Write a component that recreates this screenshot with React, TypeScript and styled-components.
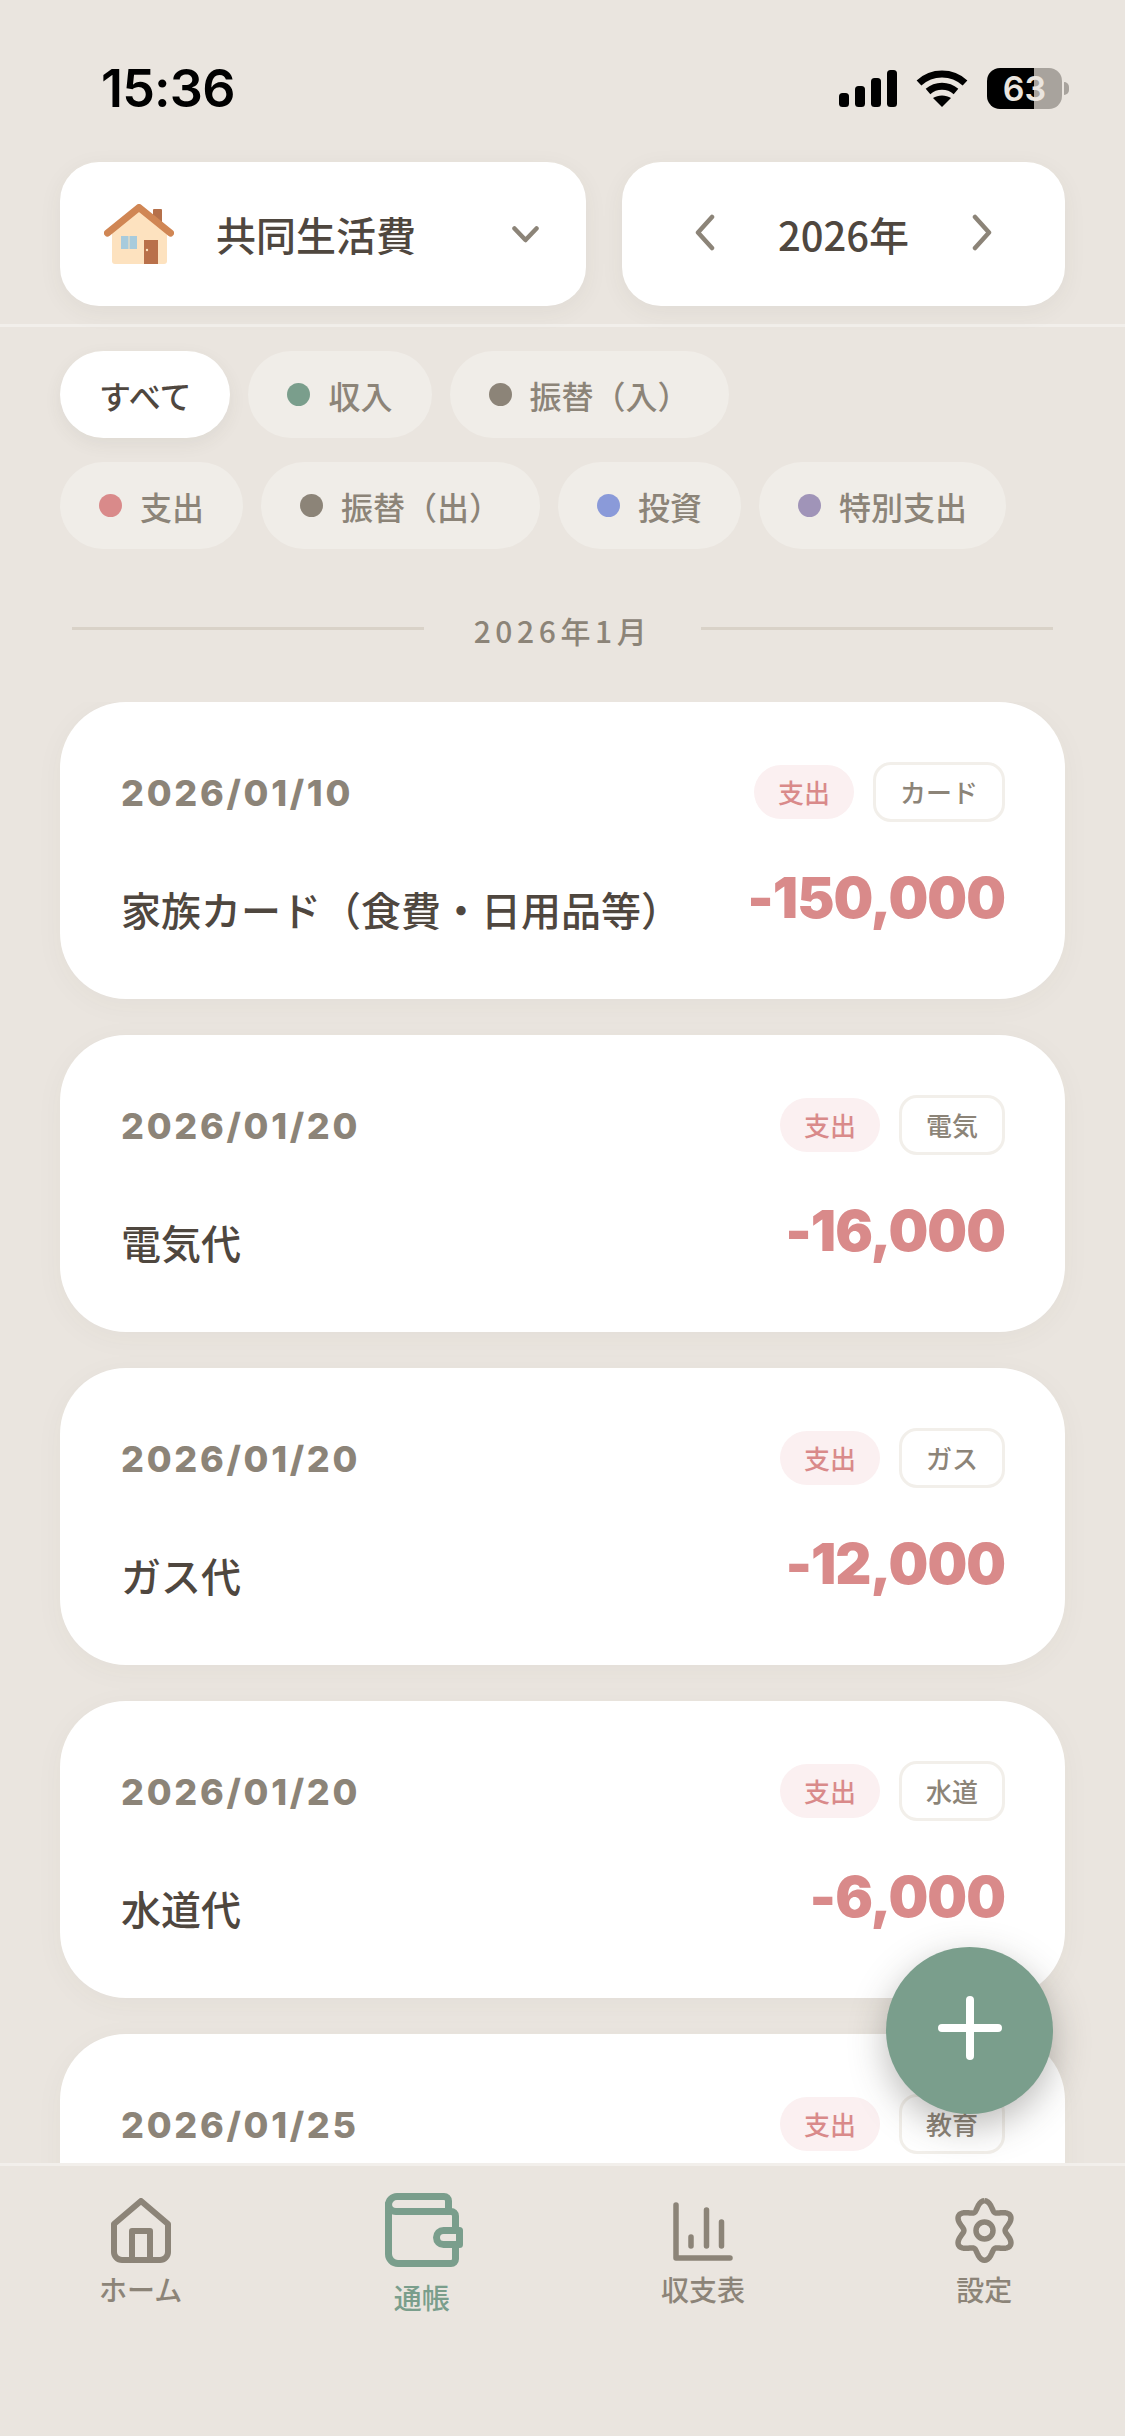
import React from 'react';
import styled, { createGlobalStyle } from 'styled-components';

const GlobalStyle = createGlobalStyle`
  html, body {
    margin: 0;
    padding: 0;
    background: #eae5df;
  }
  * {
    box-sizing: border-box;
  }
`;

const FONT = `Inter, "Noto Sans CJK JP", sans-serif`;
const CJK_FONT = `"Noto Sans CJK JP", sans-serif`;

const Phone = styled.div`
  position: relative;
  width: 1125px;
  height: 2436px;
  overflow: hidden;
  background: #eae5df;
  display: flex;
  flex-direction: column;
  font-family: ${FONT};
  color: #4f473f;
`;
const StatusBar = styled.div`
  height: 162px;
  flex: 0 0 162px;
  padding: 64px 55px 0 101px;
  display: flex;
  justify-content: space-between;
  align-items: flex-start;
`;
const Time = styled.div`
  font-size: 52px;
  line-height: 50px;
  font-weight: 600;
  color: #000;
  letter-spacing: -0.8px;
`;
const StatusIcons = styled.div`
  display: flex;
  align-items: center;
  gap: 19px;
  padding-top: 4px;
`;
const Battery = styled.div`
  position: relative;
  width: 75px;
  height: 41px;
  border-radius: 13px;
  background: linear-gradient(to right, #000 0 47px, #a8a39d 47px);
  color: #eae5df;
  font-size: 34px;
  line-height: 41px;
  font-weight: 600;
  text-align: center;
  margin-right: 8px;
  &::after {
    content: '';
    position: absolute;
    right: -7px;
    top: 14px;
    width: 5px;
    height: 13px;
    border-radius: 0 6px 6px 0;
    background: #a8a39d;
  }
`;
const Header = styled.div`
  display: flex;
  gap: 36px;
  padding: 0 60px 18px;
  border-bottom: 3px solid #f2efeb;
`;
const Panel = styled.div<{ $width: number }>`
  width: ${(p) => p.$width}px;
  height: 144px;
  border-radius: 39px;
  background: #fff;
  box-shadow: 0 6px 24px rgba(74, 66, 56, 0.06);
  display: flex;
  align-items: center;
`;
const GroupPanel = styled(Panel)`
  padding: 0 47px 0 44px;
`;
const GroupName = styled.div`
  flex: 1;
  margin-left: 42px;
  font-size: 40px;
  font-weight: 500;
`;
const YearPanel = styled(Panel)`
  justify-content: space-between;
  padding: 0 72px;
`;
const YearText = styled.div`
  font-family: ${CJK_FONT};
  font-size: 40px;
  font-weight: 500;
`;
const Filters = styled.div`
  display: flex;
  flex-direction: column;
  gap: 24px;
  padding: 24px 60px 0;
`;
const FilterRow = styled.div`
  display: flex;
  gap: 18px;
`;
const Chip = styled.div<{ $active?: boolean }>`
  height: 87px;
  padding: 0 39px;
  border-radius: 44px;
  display: flex;
  align-items: center;
  gap: 18px;
  font-size: 32px;
  font-weight: 500;
  white-space: nowrap;
  color: ${(p) => (p.$active ? '#4f473f' : '#8c8478')};
  background: ${(p) => (p.$active ? '#fff' : '#f0ede8')};
  box-shadow: ${(p) => (p.$active ? '0 6px 18px rgba(74, 66, 56, 0.07)' : 'none')};
`;
const Dot = styled.span<{ $color: string }>`
  width: 23px;
  height: 23px;
  border-radius: 50%;
  background: ${(p) => p.$color};
`;
const MonthDivider = styled.div`
  display: flex;
  align-items: center;
  gap: 50px;
  margin: 62px 72px 0;
  height: 40px;
`;
const MonthLine = styled.div`
  flex: 1;
  height: 3px;
  background: #d9d2c8;
  margin-top: -5px;
`;
const MonthText = styled.div`
  font-family: ${CJK_FONT};
  font-size: 30px;
  letter-spacing: 4.6px;
  font-weight: 500;
  color: #8c8478;
  margin-bottom: 3px;
`;
const List = styled.div`
  flex: 1;
  min-height: 0;
  overflow: hidden;
  display: flex;
  flex-direction: column;
  gap: 36px;
  margin-top: 51px;
  padding: 0 60px;
`;
const Scroll = styled.div`
  flex: 1;
  min-height: 0;
  overflow: hidden;
  display: flex;
  flex-direction: column;
`;
const Card = styled.div`
  flex: 0 0 297px;
  border-radius: 66px;
  background: #fff;
  box-shadow: 0 6px 30px rgba(74, 66, 56, 0.04);
  padding: 60px 60px 0 61px;
`;
const CardTop = styled.div`
  display: flex;
  justify-content: space-between;
  align-items: center;
  height: 60px;
`;
const DateText = styled.div`
  font-size: 36px;
  font-weight: 800;
  letter-spacing: 2.7px;
  color: #8c8478;
  padding-top: 2px;
`;
const Tags = styled.div`
  display: flex;
  align-items: center;
  gap: 19px;
`;
const TypeTag = styled.div`
  height: 54px;
  padding: 0 24px;
  border-radius: 27px;
  background: #fbf0f1;
  color: #d98a8a;
  font-size: 26px;
  font-weight: 500;
  line-height: 58px;
`;
const CategoryTag = styled.div`
  height: 60px;
  padding: 0 24px;
  border-radius: 18px;
  border: 3px solid #f2efea;
  background: #fff;
  color: #8c8478;
  font-size: 26px;
  font-weight: 500;
  line-height: 58px;
`;
const CardBottom = styled.div`
  display: flex;
  justify-content: space-between;
  align-items: flex-start;
  margin-top: 46px;
`;
const Title = styled.div`
  font-size: 40px;
  font-weight: 500;
  line-height: 56px;
  margin-top: 16px;
  white-space: nowrap;
`;
const Amount = styled.div`
  font-size: 56px;
  font-weight: 900;
  line-height: 60px;
  letter-spacing: -1px;
  color: #d98a8a;
`;
const Nav = styled.div`
  flex: 0 0 273px;
  border-top: 3px solid #f2efeb;
  background: #eae5df;
  display: grid;
  grid-template-columns: repeat(4, 1fr);
`;
const Tab = styled.div<{ $active?: boolean }>`
  display: flex;
  flex-direction: column;
  align-items: center;
  padding-top: ${(p) => (p.$active ? 27 : 32)}px;
  gap: ${(p) => (p.$active ? 14 : 10)}px;
  font-size: 28px;
  font-weight: 500;
  line-height: 36px;
  color: ${(p) => (p.$active ? '#7a9e8c' : '#8c8478')};
`;
const Fab = styled.div`
  position: absolute;
  left: 886px;
  top: 1947px;
  width: 167px;
  height: 167px;
  border-radius: 50%;
  background: #7a9e8c;
  box-shadow: 0 12px 36px rgba(60, 55, 50, 0.34);
  display: flex;
  align-items: center;
  justify-content: center;
`;

const SignalIcon = () => (
  <svg width="58" height="37" viewBox="0 0 58 37" fill="#000">
    <rect x="0" y="23" width="10" height="14" rx="3.5" />
    <rect x="16" y="16" width="10" height="21" rx="3.5" />
    <rect x="32" y="8" width="10" height="29" rx="3.5" />
    <rect x="48" y="0" width="10" height="37" rx="3.5" />
  </svg>
);

const WifiIcon = () => (
  <svg width="52" height="38" viewBox="0 0 52 38" fill="none" stroke="#000" strokeWidth="7">
    <path d="M3 13 C16 1 36 1 49 13" />
    <path d="M12 21.5 C20 14.5 32 14.5 40 21.5" />
    <path d="M26 37 L17 28 C22 24.5 30 24.5 35 28 Z" fill="#000" stroke="none" />
  </svg>
);

const HouseLogo = () => (
  <svg width="70" height="60" viewBox="0 0 70 60">
    <rect x="49" y="5" width="9" height="18" rx="1" fill="#b5704a" />
    <path d="M8 28 L35 4 L63 28 V57 a3 3 0 0 1 -3 3 H11 a3 3 0 0 1 -3 -3 Z" fill="#fde2bf" />
    <path d="M3.5 29 L35 3.5 L66.5 29" fill="none" stroke="#d08654" strokeWidth="7" strokeLinecap="round" strokeLinejoin="round" />
    <rect x="17" y="32" width="7.5" height="13" fill="#a8cbdc" />
    <rect x="25.5" y="32" width="7.5" height="13" fill="#a8cbdc" />
    <rect x="40" y="36" width="14" height="24" fill="#b9704a" />
    <circle cx="43" cy="46" r="1.2" fill="#fde2bf" />
  </svg>
);

const Chevron = ({ d, width, height }: { d: string; width: number; height: number }) => (
  <svg width={width} height={height} viewBox={`0 0 ${width} ${height}`} fill="none" stroke="#8c8478" strokeWidth="4.5" strokeLinecap="round" strokeLinejoin="round">
    <path d={d} />
  </svg>
);

const HomeIcon = () => (
  <svg width="62" height="65" viewBox="0 0 62 65" fill="none" stroke="#8c8478" strokeWidth="6" strokeLinejoin="round" strokeLinecap="round">
    <path d="M4 26 L31 3 L58 26 V54 a8 8 0 0 1 -8 8 H12 a8 8 0 0 1 -8 -8 Z" />
    <path d="M22 62 V33 H40 V62" />
  </svg>
);

const WalletIcon = () => (
  <svg width="82" height="74" viewBox="-4 0 82 74" fill="none" stroke="#7a9e8c" strokeWidth="7" strokeLinejoin="round" strokeLinecap="round">
    <path d="M63.5 18.5 V8 a4.5 4.5 0 0 0 -4.5 -4.5 H12 a8.5 8.5 0 0 0 -8.5 8.5 V61 a9.5 9.5 0 0 0 9.5 9.5 H66 a4.5 4.5 0 0 0 4.5 -4.5 V52" />
    <path d="M3.5 11 a7.5 7.5 0 0 0 7.5 7.5 H66 a4.5 4.5 0 0 1 4.5 4.5 V37" />
    <path d="M74.5 37.5 H58.5 a7 7 0 0 0 0 14 H74.5 Z" />
  </svg>
);

const ChartIcon = () => (
  <svg width="62" height="65" viewBox="0 0 62 65" fill="none" stroke="#8c8478" strokeWidth="5.5" strokeLinecap="round" strokeLinejoin="round">
    <path d="M4 7 V60 H58" />
    <path d="M19 39 V48 M34.5 12 V48 M49.5 24 V48" />
  </svg>
);

// six soft lobes, traced around the centre
const gearPath = Array.from({ length: 145 }, (_, i) => {
  const angle = (i / 144) * Math.PI * 2;
  const radius = 25.2 + 4.6 * Math.cos(6 * angle);
  const x = 32.5 + radius * Math.sin(angle);
  const y = 32.5 - radius * Math.cos(angle);
  return `${i === 0 ? 'M' : 'L'}${x.toFixed(2)} ${y.toFixed(2)}`;
}).join(' ');

const GearIcon = () => (
  <svg width="65" height="65" viewBox="0 0 65 65" fill="none" stroke="#8c8478" strokeWidth="5.5" strokeLinejoin="round">
    <path d={gearPath} />
    <circle cx="32.5" cy="32.5" r="8.5" />
  </svg>
);

const PlusIcon = () => (
  <svg width="64" height="70" viewBox="0 0 64 70" stroke="#fff" strokeWidth="8" strokeLinecap="round">
    <path d="M32 4 V60 M4 32 H60" />
  </svg>
);

const firstRow = [
  { label: '収入', color: '#7a9e8c' },
  { label: '振替（入）', color: '#8c8478' },
];
const secondRow = [
  { label: '支出', color: '#d98a8a' },
  { label: '振替（出）', color: '#8c8478' },
  { label: '投資', color: '#8a9ad9' },
  { label: '特別支出', color: '#a094b8' },
];
const entries = [
  { date: '2026/01/10', tag: 'カード', title: '家族カード（食費・日用品等）', amount: '-150,000' },
  { date: '2026/01/20', tag: '電気', title: '電気代', amount: '-16,000' },
  { date: '2026/01/20', tag: 'ガス', title: 'ガス代', amount: '-12,000' },
  { date: '2026/01/20', tag: '水道', title: '水道代', amount: '-6,000' },
  { date: '2026/01/25', tag: '教育' },
];

const App = () => {
  return (
    <Phone>
      <GlobalStyle />
      <StatusBar>
        <Time>15:36</Time>
        <StatusIcons>
          <SignalIcon />
          <WifiIcon />
          <Battery>63</Battery>
        </StatusIcons>
      </StatusBar>
      <Header>
        <GroupPanel $width={526}>
          <HouseLogo />
          <GroupName>共同生活費</GroupName>
          <Chevron d="M2.5 2.5 L13.5 14 L24.5 2.5" width={27} height={17} />
        </GroupPanel>
        <YearPanel $width={443}>
          <Chevron d="M18 3 L4 18.5 L18 34" width={22} height={40} />
          <YearText>2026年</YearText>
          <Chevron d="M4 3 L18 18.5 L4 34" width={22} height={40} />
        </YearPanel>
      </Header>
      <Scroll>
        <Filters>
          <FilterRow>
            <Chip $active>すべて</Chip>
            {firstRow.map((chip) => (
              <Chip key={chip.label}>
                <Dot $color={chip.color} />
                {chip.label}
              </Chip>
            ))}
          </FilterRow>
          <FilterRow>
            {secondRow.map((chip) => (
              <Chip key={chip.label}>
                <Dot $color={chip.color} />
                {chip.label}
              </Chip>
            ))}
          </FilterRow>
        </Filters>
        <MonthDivider>
          <MonthLine />
          <MonthText>2026年1月</MonthText>
          <MonthLine />
        </MonthDivider>
        <List>
          {entries.map((entry, index) => (
            <Card key={index}>
              <CardTop>
                <DateText>{entry.date}</DateText>
                <Tags>
                  <TypeTag>支出</TypeTag>
                  <CategoryTag>{entry.tag}</CategoryTag>
                </Tags>
              </CardTop>
              {entry.title && (
                <CardBottom>
                  <Title>{entry.title}</Title>
                  <Amount>{entry.amount}</Amount>
                </CardBottom>
              )}
            </Card>
          ))}
        </List>
      </Scroll>
      <Nav>
        <Tab>
          <HomeIcon />
          ホーム
        </Tab>
        <Tab $active>
          <WalletIcon />
          通帳
        </Tab>
        <Tab>
          <ChartIcon />
          収支表
        </Tab>
        <Tab>
          <GearIcon />
          設定
        </Tab>
      </Nav>
      <Fab>
        <PlusIcon />
      </Fab>
    </Phone>
  );
};

export default App;
